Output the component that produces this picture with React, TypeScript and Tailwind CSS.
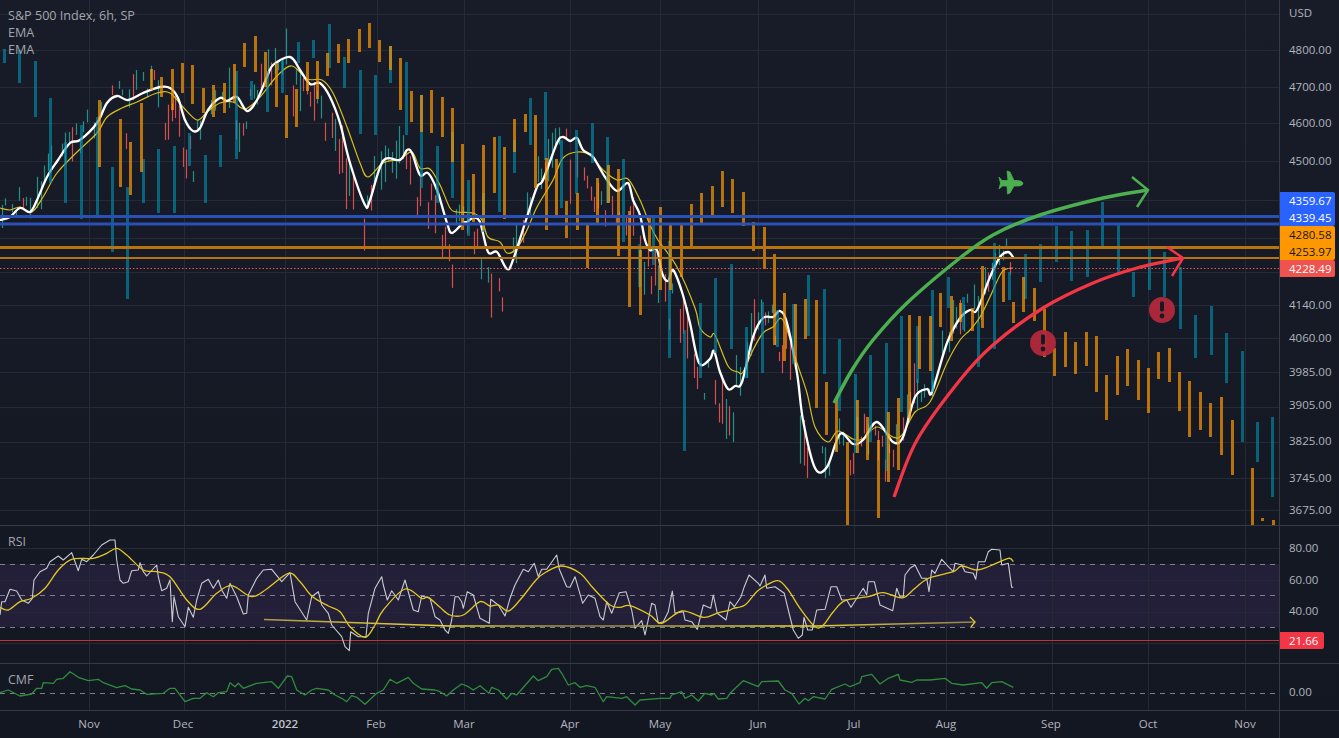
import React from "react";

type P = [number, number];
type Bar = [number, number, number];

const FONT = "font-['Open_Sans','Noto_Sans',sans-serif]";

const VX = [89, 184, 285, 377, 464, 570, 660, 758, 854, 946, 1052, 1148, 1245];
const HMAIN = [14, 50, 87, 123, 161, 200, 238, 272, 305, 338, 372, 407, 442, 478, 510];

const white: P[] = [
  [0, 220], [10, 217], [20, 208], [30, 212], [37, 200], [47, 177], [58, 160], [70, 143], [80, 140], [97, 123], [107, 103], [117, 96], [128, 100], [143, 93], [160, 87], [170, 88], [178, 98], [185, 120], [193, 131], [200, 128], [208, 110], [220, 98], [227, 101], [237, 97], [247, 111], [257, 100], [267, 77], [273, 65], [290, 57], [300, 70], [310, 84], [320, 83], [330, 97], [340, 123], [350, 163], [365, 205], [370, 200], [383, 161], [400, 160], [407, 150], [412, 153], [420, 175], [428, 173], [437, 190], [447, 223], [452, 233], [463, 223], [467, 222], [473, 218], [480, 222], [488, 252], [497, 252], [507, 269], [513, 260], [527, 217], [537, 187], [543, 180], [557, 143], [563, 137], [570, 141], [577, 138], [583, 150], [593, 157], [605, 177], [617, 191], [628, 183], [633, 200], [640, 215], [645, 240], [650, 250], [657, 250], [662, 273], [668, 281], [673, 270], [682, 292], [690, 323], [699, 363], [710, 359], [714, 351], [720, 372], [728, 389], [735, 386], [742, 382], [753, 337], [763, 318], [773, 317], [780, 311], [787, 323], [797, 373], [803, 420], [815, 468], [827, 467], [840, 434], [853, 444], [863, 440], [877, 422], [893, 442], [903, 437], [915, 397], [927, 389], [932, 392], [947, 343], [960, 318], [970, 310], [977, 310], [990, 277], [1000, 257], [1008, 252], [1013, 257],
];

const yellow: P[] = [
  [0, 208], [10, 210], [20, 207], [32, 212], [43, 197], [57, 173], [77, 152], [97, 133], [107, 117], [122, 108], [137, 102], [157, 93], [170, 93], [183, 107], [197, 120], [207, 112], [220, 103], [233, 102], [245, 109], [260, 97], [277, 76], [292, 66], [307, 79], [322, 80], [333, 93], [347, 127], [360, 163], [368, 177], [383, 163], [400, 159], [412, 152], [420, 168], [430, 169], [440, 185], [450, 208], [457, 212], [473, 213], [482, 220], [488, 237], [500, 242], [507, 253], [517, 248], [527, 230], [537, 207], [553, 180], [563, 158], [577, 152], [590, 155], [603, 170], [617, 180], [628, 179], [640, 200], [650, 225], [658, 240], [677, 267], [695, 308], [700, 328], [710, 337], [715, 335], [728, 366], [738, 372], [743, 372], [753, 350], [763, 333], [773, 327], [783, 320], [797, 363], [807, 393], [815, 427], [828, 442], [838, 431], [853, 439], [862, 439], [877, 427], [893, 437], [902, 435], [915, 412], [930, 402], [947, 363], [960, 340], [970, 330], [980, 317], [990, 297], [1002, 272], [1013, 268],
];

const teal: Bar[] = [
  [4, 49, 63], [19, 50, 83], [35, 61, 117], [50, 98, 183], [65, 142, 203], [81, 125, 219], [97, 117, 217], [112, 167, 252], [127, 187, 299], [143, 159, 203], [158, 149, 213], [174, 146, 213], [189, 133, 166], [205, 155, 203], [220, 135, 167], [236, 71, 159], [251, 81, 100], [267, 71, 112], [282, 60, 93], [298, 42, 63], [313, 40, 58], [329, 24, 68], [344, 57, 88], [360, 70, 134], [375, 75, 135], [390, 46, 83], [406, 62, 135], [421, 95, 188], [437, 146, 203], [452, 132, 198], [468, 180, 236], [483, 193, 232], [499, 136, 212], [514, 140, 173], [530, 98, 145], [545, 92, 160], [561, 140, 208], [576, 130, 194], [592, 123, 163], [607, 137, 203], [623, 159, 242], [639, 244, 287], [653, 217, 265], [669, 241, 358], [684, 330, 451], [700, 303, 378], [715, 278, 353], [731, 264, 349], [746, 327, 378], [762, 302, 373], [777, 310, 347], [793, 304, 364], [808, 275, 336], [824, 289, 374], [839, 339, 411], [855, 374, 453], [870, 355, 442], [886, 343, 471], [901, 316, 412], [917, 326, 383], [932, 290, 392], [948, 277, 308], [963, 297, 330], [978, 322, 367], [994, 243, 349], [1009, 272, 300], [1025, 254, 299], [1040, 244, 282], [1056, 226, 262], [1071, 231, 281], [1087, 230, 277], [1102, 202, 247], [1118, 224, 273], [1133, 272, 297], [1149, 249, 290], [1164, 252, 297], [1180, 267, 329], [1195, 315, 358], [1211, 306, 355], [1226, 333, 383], [1242, 351, 442], [1257, 422, 462], [1272, 417, 497],
];

const orange: Bar[] = [
  [99, 100, 167], [120, 119, 187], [130, 142, 195], [141, 103, 172], [151, 69, 90], [161, 77, 97], [172, 69, 110], [182, 63, 93], [192, 65, 104], [203, 88, 113], [213, 85, 117], [224, 83, 113], [234, 64, 103], [244, 43, 67], [255, 36, 72], [265, 52, 87], [276, 63, 107], [286, 95, 138], [296, 89, 127], [307, 62, 91], [317, 61, 99], [327, 53, 76], [338, 44, 63], [348, 39, 63], [359, 29, 52], [369, 23, 48], [379, 40, 62], [390, 46, 70], [400, 58, 110], [411, 91, 122], [421, 95, 132], [431, 90, 133], [442, 97, 137], [452, 108, 162], [462, 144, 230], [473, 174, 222], [483, 145, 230], [494, 137, 193], [504, 147, 219], [514, 119, 152], [525, 114, 132], [535, 115, 188], [546, 158, 230], [556, 159, 216], [566, 201, 238], [577, 193, 230], [587, 224, 268], [597, 178, 224], [608, 165, 203], [618, 169, 256], [629, 211, 307], [640, 250, 315], [649, 218, 250], [660, 207, 290], [670, 224, 290], [681, 225, 277], [691, 204, 247], [701, 193, 224], [712, 186, 215], [722, 171, 207], [732, 179, 213], [743, 192, 226], [753, 222, 251], [764, 227, 269], [774, 254, 345], [784, 293, 361], [795, 304, 363], [805, 299, 339], [816, 300, 408], [826, 382, 435], [836, 397, 452], [847, 442, 525], [857, 400, 453], [867, 417, 460], [878, 440, 518], [888, 412, 482], [898, 398, 470], [909, 315, 418], [919, 316, 369], [930, 316, 371], [940, 293, 327], [951, 296, 341], [960, 303, 322], [972, 308, 331], [982, 266, 328], [1003, 267, 302], [1013, 302, 323], [1023, 277, 312], [1034, 288, 321], [1044, 309, 357], [1054, 348, 376], [1065, 332, 367], [1075, 342, 374], [1086, 332, 366], [1096, 336, 392], [1106, 375, 420], [1117, 356, 395], [1127, 349, 386], [1138, 360, 400], [1148, 368, 413], [1158, 352, 379], [1169, 348, 382], [1179, 372, 411], [1189, 381, 437], [1200, 392, 430], [1210, 403, 437], [1221, 397, 455], [1232, 420, 475], [1252, 468, 525], [1262, 518, 521], [1273, 520, 525],
];

const z = (ox: number, oy: number, a: number[]): P[] => {
  const r: P[] = [];
  for (let i = 0; i < a.length; i += 2) r.push([ox + a[i] / 3, oy + a[i + 1] / 3]);
  return r;
};

const rsiWhite: P[] = [
  ...z(0, 520, [0, 285, 5, 245, 15, 245, 30, 208, 50, 213, 65, 240, 85, 250, 97, 235, 102, 180, 120, 155, 140, 145, 150, 125, 175, 108, 190, 120, 215, 98, 225, 125, 235, 152, 245, 118, 260, 125, 280, 105, 305, 75, 330, 60, 345, 60, 350, 120, 360, 180, 370, 190, 385, 185, 395, 152, 415, 150, 420, 128, 430, 155, 440, 168, 470, 135, 475, 170, 485, 212, 500, 205, 510, 180, 517, 305, 522, 230, 535, 290, 555, 320, 565, 262, 580, 292, 590, 240, 605, 190, 625, 178, 640, 205, 655, 180, 665, 210, 680, 235, 690, 190, 710, 230, 730, 282, 740, 280, 745, 225, 770, 175, 790, 150, 815, 148, 845, 185, 870, 158, 885, 245, 920, 300, 935, 230, 955, 215, 965, 255, 985, 280, 995, 315, 1025, 350, 1035, 380, 1048, 392, 1052, 335, 1075, 350, 1098, 350, 1105, 280, 1125, 205, 1145, 170, 1150, 195, 1162, 240, 1175, 212, 1195, 240, 1215, 180, 1240, 270, 1255, 275, 1265, 228, 1290, 235, 1305, 290]),
  ...z(440, 530, [0, 270, 15, 300, 25, 310, 35, 270, 45, 200, 55, 200, 65, 215, 70, 235, 82, 185, 100, 195, 120, 265, 148, 280, 152, 208, 175, 225, 195, 258, 210, 205, 225, 165, 250, 118, 265, 125, 283, 100, 295, 140, 305, 118, 320, 118, 350, 75, 358, 118, 380, 170, 390, 172, 405, 140, 428, 220, 445, 195, 465, 205, 480, 260, 490, 270, 500, 215, 515, 250, 538, 188, 558, 185, 575, 240, 585, 295, 605, 272, 615, 315, 635, 220, 645, 225, 655, 280, 670, 275, 685, 245, 697, 183, 705, 250, 730, 245, 735, 270, 755, 275, 772, 298, 790, 225, 812, 235, 820, 195, 832, 250, 858, 270, 870, 215]),
  ...z(725, 530, [15, 215, 28, 230, 48, 200, 58, 170, 72, 135, 100, 160, 105, 168, 120, 135, 125, 175, 150, 170, 178, 190, 190, 240, 205, 300, 220, 325, 232, 315, 237, 262, 248, 300, 262, 300, 275, 240, 300, 238, 318, 170, 335, 170, 350, 210, 365, 210, 378, 232, 415, 175, 425, 195, 430, 155, 448, 155, 465, 225, 503, 242, 515, 175, 525, 200, 535, 200, 540, 135, 555, 115, 570, 105, 590, 145, 605, 145, 612, 185, 620, 120, 630, 130, 650, 88, 670, 110, 685, 125, 690, 100, 710, 105, 720, 125, 745, 130, 752, 148, 760, 95, 780, 95, 790, 65, 800, 58, 825, 60, 830, 105, 850, 100, 860, 172, 865, 172]),
];

const rsiYellow: P[] = [
  ...z(0, 520, [0, 262, 25, 270, 60, 245, 95, 235, 135, 205, 175, 150, 215, 118, 280, 115, 320, 100, 350, 85, 380, 105, 430, 150, 470, 155, 510, 170, 560, 240, 600, 268, 650, 220, 695, 197, 755, 230, 800, 207, 865, 160, 900, 185, 935, 228, 985, 258, 1020, 275, 1050, 320, 1095, 352, 1125, 315, 1150, 270, 1215, 207, 1265, 235, 1285, 232]),
  ...z(440, 530, [0, 232, 30, 255, 70, 255, 120, 215, 150, 228, 175, 225, 205, 243, 240, 210, 290, 148, 320, 125, 365, 108, 420, 130, 460, 175, 510, 225, 540, 232, 570, 227, 630, 255, 665, 280, 725, 243, 790, 262, 830, 250, 870, 240]),
  ...z(725, 530, [25, 235, 60, 225, 95, 185, 125, 165, 160, 152, 190, 180, 225, 235, 270, 290, 295, 285, 325, 245, 360, 212, 430, 200, 470, 188, 500, 195, 535, 203, 570, 175, 610, 145, 685, 125, 710, 108, 755, 120, 795, 108, 850, 85, 865, 95]),
];

const cmf: P[] = [
  ...z(0, 520, [0, 518, 25, 510, 60, 528, 95, 522, 110, 505, 125, 505, 130, 488, 160, 490, 170, 478, 190, 475, 210, 455, 235, 472, 265, 482, 295, 478, 310, 488, 350, 503, 375, 497, 395, 507, 420, 510, 440, 523, 490, 520, 510, 505, 525, 505, 555, 545, 580, 535, 600, 535, 620, 518, 640, 530, 655, 518, 680, 515, 690, 488, 705, 500, 715, 490, 730, 505, 770, 490, 815, 485, 835, 505, 862, 468, 875, 470, 890, 510, 915, 525, 935, 510, 950, 505, 985, 510, 1005, 525, 1025, 535, 1040, 545, 1055, 527, 1070, 532, 1095, 553, 1130, 520, 1150, 510, 1170, 478, 1190, 490, 1225, 472, 1240, 490, 1265, 507, 1305, 510]),
  ...z(440, 530, [0, 485, 20, 498, 40, 480, 65, 462, 85, 470, 100, 480, 120, 467, 147, 490, 155, 472, 175, 480, 200, 507, 215, 490, 230, 495, 280, 438, 295, 452, 320, 440, 335, 418, 355, 415, 365, 430, 385, 465, 405, 458, 420, 472, 440, 467, 465, 472, 490, 515, 500, 500, 545, 505, 560, 500, 585, 525, 600, 510, 660, 505, 690, 505, 695, 495, 725, 485, 735, 505, 755, 495, 775, 513, 795, 490, 815, 495, 822, 490, 835, 507, 860, 505, 870, 490]),
  ...z(725, 530, [15, 490, 55, 452, 100, 470, 110, 455, 160, 453, 180, 480, 200, 490, 222, 522, 240, 505, 250, 512, 265, 500, 300, 507, 320, 478, 360, 462, 375, 470, 405, 458, 410, 440, 440, 433, 465, 462, 490, 445, 520, 433, 525, 450, 560, 457, 575, 450, 615, 450, 660, 445, 680, 460, 715, 465, 770, 458, 785, 475, 800, 458, 830, 455, 865, 472]),
];

const lineAt = (x: number) => {
  for (let i = 1; i < white.length; i++) {
    if (x <= white[i][0]) {
      const [a, b] = white[i - 1];
      const [c, d] = white[i];
      return b + ((d - b) * (x - a)) / (c - a);
    }
  }
  return white[white.length - 1][1];
};

const buildCandles = () => {
  let s = 20220817;
  const rnd = () => {
    s = (s * 1664525 + 1013904223) >>> 0;
    return s / 4294967296;
  };
  const out: { x: number; a: number; b: number; up: boolean }[] = [];
  for (let x = 1.5; x <= 1013; x += 3.55) {
    const keep = rnd() > 0.22;
    const slope = lineAt(x + 9) - lineAt(Math.max(0, x - 9));
    const rising = slope < 0;
    const up = rnd() < 0.8 ? rising : !rising;
    const len = 5 + rnd() * rnd() * 42 + Math.abs(slope) * 0.3;
    const base = lineAt(x);
    const mid = rising ? base - 18 + rnd() * 24 : base + 8 + rnd() * 38;
    if (keep) out.push({ x: Math.round(x) + 0.5, a: mid - len / 2, b: mid + len / 2, up });
  }
  return out;
};

const candles = buildCandles();

const pts = (a: P[]) => a.map((p) => `${p[0].toFixed(1)},${p[1].toFixed(1)}`).join(" ");

const smooth = (a: P[]) => {
  let d = `M${a[0][0]} ${a[0][1]}`;
  for (let i = 0; i < a.length - 1; i++) {
    const p0 = a[Math.max(0, i - 1)];
    const p1 = a[i];
    const p2 = a[i + 1];
    const p3 = a[Math.min(a.length - 1, i + 2)];
    d += ` C${(p1[0] + (p2[0] - p0[0]) / 6).toFixed(1)} ${(p1[1] + (p2[1] - p0[1]) / 6).toFixed(1)} ${(p2[0] - (p3[0] - p1[0]) / 6).toFixed(1)} ${(p2[1] - (p3[1] - p1[1]) / 6).toFixed(1)} ${p2[0].toFixed(1)} ${p2[1].toFixed(1)}`;
  }
  return d;
};

const Grid = ({ h, y0, y1 }: { h: number[]; y0: number; y1: number }) => (
  <g stroke="#262a36" strokeWidth="1">
    {VX.map((x) => (
      <line key={`v${x}`} x1={x + 0.5} x2={x + 0.5} y1={y0} y2={y1} />
    ))}
    {h.map((y) => (
      <line key={`h${y}`} x1="0" x2="1280" y1={y + 0.5} y2={y + 0.5} />
    ))}
  </g>
);

const Alert = ({ x, y }: { x: number; y: number }) => (
  <g>
    <circle cx={x} cy={y} r="13" fill="#b5293a" fillOpacity="0.93" />
    <rect x={x - 2} y={y - 8.5} width="4" height="10" rx="1.4" fill="#161a25" />
    <circle cx={x} cy={y + 6} r="2.4" fill="#161a25" />
  </g>
);

const MainChart = () => (
  <svg viewBox="0 0 1279 525" className="block w-full h-full">
    <Grid h={HMAIN} y0={0} y1={525} />
    <g strokeWidth="1.2">
      {candles.map((c, i) => (
        <line key={i} x1={c.x} x2={c.x} y1={c.a} y2={c.b} stroke={c.up ? "#22a093" : "#ef5350"} strokeOpacity="0.9" />
      ))}
    </g>
    <path d={smooth(yellow)} fill="none" stroke="#d8bf1e" strokeWidth="1.2" />
    <path d={smooth(white)} fill="none" stroke="#ffffff" strokeWidth="2.3" strokeLinecap="round" />
    <g>
      {teal.map(([x, a, b], i) => (
        <rect key={i} x={x - 1} y={a} width="3" height={b - a} fill="#0090b0" fillOpacity="0.62" />
      ))}
      {orange.map(([x, a, b], i) => (
        <rect key={i} x={x - 1} y={a} width="3" height={b - a} fill="#ff9800" fillOpacity="0.7" />
      ))}
    </g>
    <line x1="0" x2="1280" y1="216.5" y2="216.5" stroke="#2a4fb5" strokeWidth="3" />
    <line x1="0" x2="1280" y1="224" y2="224" stroke="#2a4fb5" strokeWidth="3" />
    <line x1="0" x2="1280" y1="247.5" y2="247.5" stroke="#b6730e" strokeWidth="3" />
    <line x1="0" x2="1280" y1="258" y2="258" stroke="#b6730e" strokeWidth="2" />
    <line x1="0" x2="1280" y1="268.5" y2="268.5" stroke="#ef5350" strokeWidth="1" strokeDasharray="1.5 2" />
    <path d={smooth([[834, 403], [852, 370], [873, 340], [907, 303], [960, 258], [993, 235], [1040, 215], [1103, 198], [1148, 190]])} fill="none" stroke="#4caf50" strokeWidth="3.5" />
    <path d="M1132 177 L1148 190 L1137 207" fill="none" stroke="#4caf50" strokeWidth="2.5" />
    <path d={smooth([[894, 497], [917, 440], [960, 380], [993, 345], [1043, 308], [1093, 283], [1137, 268], [1183, 258]])} fill="none" stroke="#f23645" strokeWidth="3.3" />
    <path d="M1167 247 L1183 258 L1172 276" fill="none" stroke="#f23645" strokeWidth="2.5" />
    <path
      d="M1023 183 Q1022 180.500 1017 180.500 L1014 180.500 L1010 172 L1007 171 L1008 180.500 L1002 180.500 L999 177 L1000.500 183 L999 189 L1002.500 186 L1007 186 L1007.500 194 L1010 193 L1014 186 L1019 186 Q1023 185.500 1023 183 Z"
      fill="#4caf50"
      stroke="#4caf50"
      strokeWidth="0.8"
      strokeLinejoin="round"
    />
    <Alert x={1043} y={343} />
    <Alert x={1162} y={310} />
  </svg>
);

const RsiChart = () => (
  <svg viewBox="0 526 1279 137" className="block w-full h-full">
    <defs>
      <linearGradient id="trend" x1="264" x2="975" y1="0" y2="0" gradientUnits="userSpaceOnUse">
        <stop offset="0" stopColor="#a89b45" />
        <stop offset="0.25" stopColor="#e8d530" />
        <stop offset="0.45" stopColor="#8f8548" />
        <stop offset="0.75" stopColor="#e8d530" />
        <stop offset="1" stopColor="#8f8548" />
      </linearGradient>
    </defs>
    <rect x="0" y="564" width="1280" height="63" fill="#241f38" />
    <Grid h={[548, 580, 612, 643]} y0={526} y1={663} />
    <g stroke="#7d808b" strokeWidth="1" strokeDasharray="5 5">
      <line x1="0" x2="1280" y1="564.5" y2="564.5" />
      <line x1="0" x2="1280" y1="595.5" y2="595.5" />
      <line x1="0" x2="1280" y1="627.5" y2="627.5" />
    </g>
    <line x1="0" x2="1280" y1="640.5" y2="640.5" stroke="#c22f3d" strokeWidth="1" />
    <polyline points={pts(rsiWhite)} fill="none" stroke="#c9cbd2" strokeWidth="1.1" strokeLinejoin="round" />
    <path d={smooth(rsiYellow)} fill="none" stroke="#e2c922" strokeWidth="1.3" />
    <path d="M264 619.500 L450 626 L815 626 L975 622" fill="none" stroke="url(#trend)" strokeWidth="1.6" />
    <path d="M970 617 L975 622 L971 627" fill="none" stroke="#d9c731" strokeWidth="1.4" />
  </svg>
);

const CmfChart = () => (
  <svg viewBox="0 664 1279 46" className="block w-full h-full">
    <Grid h={[]} y0={664} y1={710} />
    <line x1="0" x2="1280" y1="693.5" y2="693.5" stroke="#7d808b" strokeWidth="1" strokeDasharray="5 5" />
    <polyline points={pts(cmf)} fill="none" stroke="#2f8c3d" strokeWidth="1.3" strokeLinejoin="round" />
  </svg>
);

const AxisLabel = ({ y, t }: { y: number; t: string }) => (
  <div className="absolute left-[9px] -translate-y-1/2 text-[11.5px] leading-none text-[#b2b5be]" style={{ top: y }}>
    {t}
  </div>
);

const priceLabels: [number, string][] = [
  [13, "USD"],
  [50, "4800.00"],
  [87, "4700.00"],
  [123, "4600.00"],
  [161, "4500.00"],
  [305, "4140.00"],
  [338, "4060.00"],
  [372, "3985.00"],
  [405, "3905.00"],
  [441, "3825.00"],
  [478, "3745.00"],
  [510, "3675.00"],
];

const months: [number, string, boolean][] = [
  [89, "Nov", false],
  [183, "Dec", false],
  [285, "2022", true],
  [376, "Feb", false],
  [464, "Mar", false],
  [570, "Apr", false],
  [660, "May", false],
  [758, "Jun", false],
  [854, "Jul", false],
  [946, "Aug", false],
  [1051, "Sep", false],
  [1148, "Oct", false],
  [1245, "Nov", false],
];

const Tag = ({ y, h, bg, text, lines }: { y: number; h: number; bg: string; text: string; lines: string[] }) => (
  <div
    className={`absolute left-0 rounded-r-[2px] flex flex-col justify-around items-start pl-[9px] text-[11.5px] leading-none ${bg} ${text}`}
    style={{ top: y, height: h }}
  >
    {lines.map((l) => (
      <span key={l}>{l}</span>
    ))}
  </div>
);

export default function App() {
  return (
    <div className={`w-[1339px] h-[738px] overflow-hidden flex flex-col bg-linear-to-b from-[#181c28] to-[#131722] ${FONT}`}>
      <div className="h-[525px] flex">
        <div className="relative w-[1280px] border-r border-[#363a45]">
          <MainChart />
          <div className="absolute left-2 top-[9px] flex flex-col gap-[3px] text-[12.6px] leading-[14px] text-[#a3a6af]">
            <span>S&amp;P 500 Index, 6h, SP</span>
            <span>EMA</span>
            <span>EMA</span>
          </div>
        </div>
        <div className="relative flex-1">
          {priceLabels.map(([y, t]) => (
            <AxisLabel key={t} y={y} t={t} />
          ))}
          <Tag y={192} h={34} bg="w-[55px] bg-[#2962ff]" text="text-white" lines={["4359.67", "4339.45"]} />
          <Tag y={226} h={34} bg="w-[55px] bg-[#ff9800]" text="text-[#131722]" lines={["4280.58", "4253.97"]} />
          <Tag y={260} h={17} bg="w-[55px] bg-[#ef5350]" text="text-white" lines={["4228.49"]} />
        </div>
      </div>

      <div className="h-[138px] flex border-t border-[#363a45]">
        <div className="relative w-[1280px] border-r border-[#363a45]">
          <RsiChart />
          <span className="absolute left-2 top-[9px] text-[12.4px] leading-[14px] text-[#a3a6af]">RSI</span>
        </div>
        <div className="relative flex-1">
          <AxisLabel y={22} t="80.00" />
          <AxisLabel y={54} t="60.00" />
          <AxisLabel y={85} t="40.00" />
          <Tag y={106} h={17} bg="w-[44px] bg-[#f23645]" text="text-white" lines={["21.66"]} />
        </div>
      </div>

      <div className="h-[47px] flex border-t border-[#363a45]">
        <div className="relative w-[1280px] border-r border-[#363a45]">
          <CmfChart />
          <span className="absolute left-2 top-[9px] text-[12.4px] leading-[14px] text-[#a3a6af]">CMF</span>
        </div>
        <div className="relative flex-1">
          <AxisLabel y={28} t="0.00" />
        </div>
      </div>

      <div className="h-[28px] flex border-t border-[#363a45]">
        <div className="relative w-[1280px] border-r border-[#363a45]">
          {months.map(([x, t, b]) => (
            <span
              key={x}
              className={`absolute top-[6px] -translate-x-1/2 text-[11.5px] leading-[14px] ${b ? "font-semibold text-[#c3c6ce]" : "text-[#b2b5be]"}`}
              style={{ left: x }}
            >
              {t}
            </span>
          ))}
        </div>
      </div>
    </div>
  );
}
